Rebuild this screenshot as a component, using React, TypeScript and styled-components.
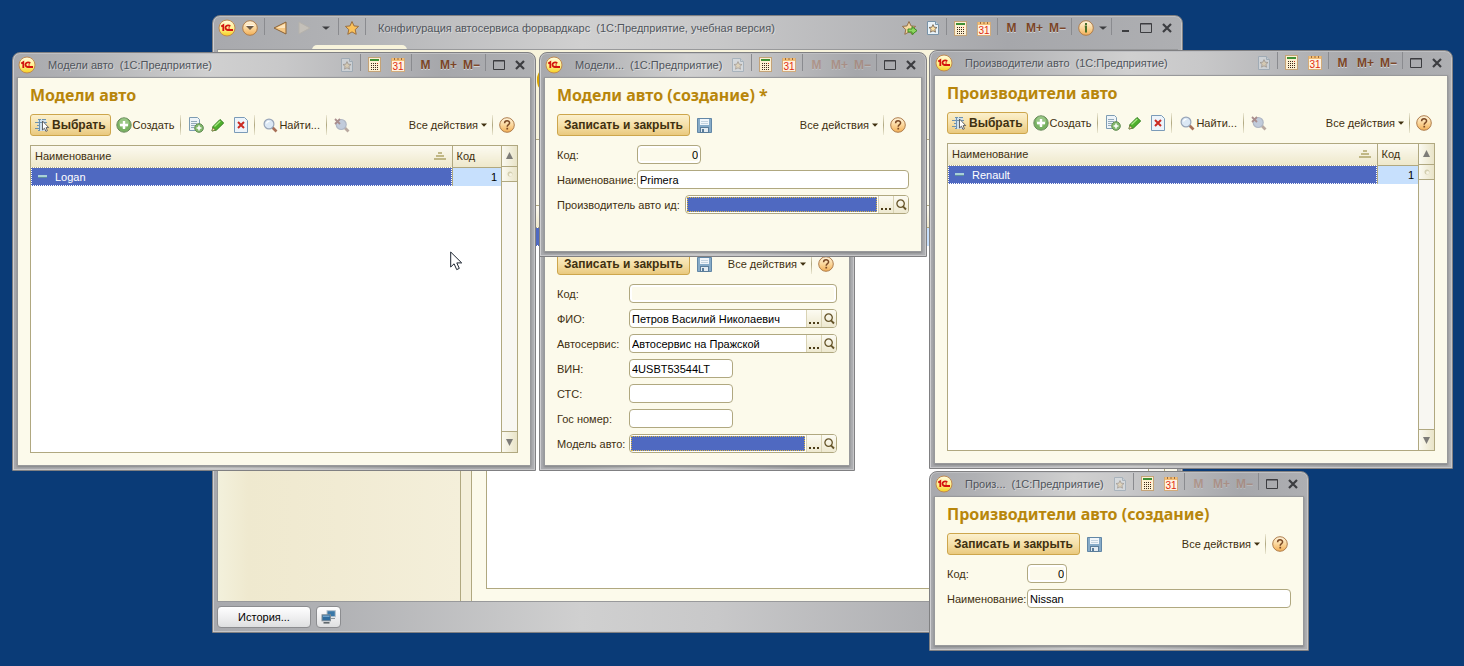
import React from "react";
import styled, { createGlobalStyle, css } from "styled-components";

const line = "#b0a880";
const cream = "#fcfaeb";
const brown = "#3f3010";

const GlobalStyle = createGlobalStyle`
  * { box-sizing: border-box; }
  html, body, #root { height: 100%; }
  body {
    margin: 0;
    font: 11px/14px "Liberation Sans", Arial, sans-serif;
    color: ${brown};
  }
  button, input { font: inherit; color: inherit; margin: 0; padding: 0; }
  button { border: 0; background: none; }
  svg { display: block; flex: none; }
`;

const Desktop = styled.div`
  position: relative;
  min-height: 100%;
  background: #0a3b77;
  overflow: hidden;
`;

/* ---------- window frame ---------- */

const Frame = styled.section<{ $x: number; $y: number; $w: number; $h: number; $main?: boolean }>`
  position: absolute;
  left: ${(p) => p.$x}px;
  top: ${(p) => p.$y}px;
  width: ${(p) => p.$w}px;
  height: ${(p) => p.$h}px;
  display: flex;
  flex-direction: column;
  padding: 0 5px ${(p) => (p.$main ? 0 : 5)}px;
  border: 1px solid #808082;
  border-radius: 8px 8px 0 0;
  background: linear-gradient(90deg, #a8a9ad 0%, #b0b1b4 12%, #d0d0d0 38%, #c8c8c9 52%, #a6a7ab 82%, #aeafb2 100%);
  box-shadow: inset 0 1px 0 #bfc0c3, inset 1px 0 0 #cfcfd1, inset -1px -1px 0 #c6c6c8;
`;

const TitleBar = styled.header<{ $main?: boolean }>`
  flex: none;
  display: flex;
  align-items: center;
  height: ${(p) => (p.$main ? 34 : 25)}px;
  padding-bottom: ${(p) => (p.$main ? 10 : 2)}px;
  margin: 0 -2px 0 -3px;
`;

const TitleText = styled.div`
  flex: 1;
  display: flex;
  gap: 6px;
  padding-left: 10px;
  white-space: nowrap;
  overflow: hidden;
  color: #50555c;
  text-shadow: 1px 1px 0 rgba(255, 255, 255, 0.4);
`;

const Tool = styled.button<{ $w?: number }>`
  flex: none;
  width: ${(p) => p.$w ?? 23}px;
  height: 20px;
  display: flex;
  align-items: center;
  justify-content: center;
  &:disabled { opacity: 0.4; }
`;

const Memory = styled(Tool)`
  font-weight: bold;
  font-size: 12px;
  color: #7a4426;
  text-shadow: 0 1px 0 rgba(255, 255, 255, 0.5);
  &:disabled { color: #a5664a; }
`;

const TitleSep = styled.i`
  flex: none;
  width: 1px;
  height: 17px;
  margin: 0 2px 4px;
  background: #8a8b8f;
`;

const Client = styled.div`
  flex: 1;
  display: flex;
  flex-direction: column;
  padding: 6px 12px 12px;
  background: ${cream};
  box-shadow: 0 0 0 1px #98999b, 0 1px 2px 1px #808283;
`;

const Heading = styled.h1`
  margin: 0 0 8px;
  font: bold 16px/22px "Noto Sans", "Open Sans", sans-serif;
  color: #b8860b;
  white-space: nowrap;
`;

/* ---------- toolbar ---------- */

const Toolbar = styled.div`
  flex: none;
  display: flex;
  align-items: center;
  height: 22px;
  margin-bottom: 9px;
  white-space: nowrap;
`;

const Primary = styled.button<{ $pad: number }>`
  flex: none;
  display: flex;
  align-items: center;
  gap: 2px;
  height: 22px;
  padding: 0 ${(p) => p.$pad}px;
  border: 1px solid #cda64c;
  border-radius: 3px;
  background: linear-gradient(#fbf0cd, #f5e0a9 50%, #e9c97e);
  font-size: 12px;
  font-weight: bold;
`;

const Command = styled.button<{ $ml?: number; $gap?: number }>`
  flex: none;
  display: flex;
  align-items: center;
  gap: ${(p) => p.$gap ?? 1}px;
  margin-left: ${(p) => p.$ml ?? 7}px;
`;

const BarSep = styled.i<{ $ml?: number }>`
  flex: none;
  width: 1px;
  height: 20px;
  margin-left: ${(p) => p.$ml ?? 6}px;
  background: linear-gradient(rgba(176, 168, 128, 0.2), ${line}, rgba(176, 168, 128, 0.2));
`;

const Spacer = styled.div`
  flex: 1;
`;

/* ---------- list ---------- */

const ListBox = styled.div`
  flex: 1;
  display: flex;
  align-items: stretch;
  border: 1px solid ${line};
  background: #fff;
`;

const ListPane = styled.div`
  flex: 1;
`;

const Table = styled.table`
  width: 100%;
  table-layout: fixed;
  border-collapse: collapse;
`;

const Th = styled.th<{ $w?: number }>`
  width: ${(p) => (p.$w ? `${p.$w}px` : "auto")};
  height: 21px;
  padding: 0 4px;
  font-weight: normal;
  text-align: left;
  border-bottom: 1px solid ${line};
  background: linear-gradient(#fcfaf0, #eee8cb);
  & + & { border-left: 1px solid ${line}; }
`;

const ThInner = styled.div`
  display: flex;
  align-items: center;
  justify-content: space-between;
  padding-right: 2px;
`;

const CellName = styled.td`
  height: 19px;
  padding: 0 5px;
  color: #fff;
  background: #4f69c1;
  outline: 1px dotted #fff;
  outline-offset: -1px;
`;

const CellCode = styled.td`
  padding: 0 4px;
  text-align: right;
  color: #000;
  background: #c7e0fd;
  border-left: 1px solid ${line};
`;

const NameInner = styled.div`
  display: flex;
  align-items: center;
  gap: 6px;
`;

const Scroll = styled.div`
  flex: none;
  width: 16px;
  display: flex;
  flex-direction: column;
  border-left: 1px solid ${line};
  background: #f8f7f2;
`;

const ScrollButton = styled.button<{ $down?: boolean; $thumb?: boolean }>`
  height: ${(p) => (p.$thumb ? 15 : 21)}px;
  display: flex;
  align-items: center;
  justify-content: center;
  background: linear-gradient(90deg, #fbfaf1, #e9e4c8);
  ${(p) =>
    p.$down
      ? css`margin-top: auto; border-top: 1px solid ${line};`
      : css`border-bottom: 1px solid ${line};`}
`;

/* ---------- fields ---------- */

const Form = styled.div`
  display: flex;
  flex-direction: column;
  gap: 6px;
`;

const Row = styled.div`
  display: flex;
  align-items: center;
  height: 19px;
`;

const Label = styled.label<{ $w: number }>`
  flex: 0 0 ${(p) => p.$w}px;
  white-space: nowrap;
`;

const fieldFrame = css`
  height: 19px;
  border: 1px solid ${line};
  border-radius: 4px;
  background: #fff;
`;

const Text = styled.input<{ $w?: number }>`
  ${fieldFrame}
  ${(p) => (p.$w ? `width: ${p.$w}px;` : "flex: 1; min-width: 0;")}
  padding: 0 2px;
  color: #000;
  &:read-only {
    text-align: right;
    background: ${cream};
    box-shadow: inset 0 0 0 2px #fff;
  }
`;

const Lookup = styled.div`
  ${fieldFrame}
  flex: 1;
  display: flex;
  align-items: stretch;
  overflow: hidden;
`;

const LookupInput = styled.input<{ $active?: boolean }>`
  flex: 1;
  min-width: 0;
  border: 0;
  padding: 0 2px;
  color: #000;
  background: transparent;
  ${(p) => p.$active && css`margin: 1px; background: #4f69c1; border: 1px dotted #d8b84a;`}
`;

const LookupButton = styled.button`
  width: 15px;
  display: flex;
  align-items: center;
  justify-content: center;
  border-left: 1px solid #d9d3b4;
  background: linear-gradient(#fcfbf2, #eee9d0);
`;

/* ---------- main window parts ---------- */

const MainTab = styled.div`
  width: 95px;
  height: 5px;
  margin: -5px 0 0 94px;
  border-radius: 6px 6px 0 0;
  background: #f8f4dc;
`;

const MainBody = styled.div`
  flex: 1;
  display: flex;
  flex-direction: column;
  background: #f6f2da;
  box-shadow: 0 0 0 1px #98999b;
`;

const Sections = styled.div`
  height: 90px;
  padding: 17px 0 0 319px;
  border-bottom: 1px solid ${line};
  background: #f8f4dc;
`;

const Coin = styled.div`
  width: 24px;
  height: 26px;
  border: 2px solid #d8a400;
  border-radius: 12px;
  background: #fbe23c;
`;

const Columns = styled.div`
  flex: 1;
  display: flex;
`;

const Sidebar = styled.nav`
  width: 243px;
  border-right: 1px solid ${line};
  background: linear-gradient(90deg, #f3f1dc 0, #efe9cf 30px, #f1ebd3 50%, #f4efda 100%);
`;

const Splitter = styled.div`
  width: 11px;
  border-right: 1px solid ${line};
  background: #f4efda;
`;

const MainForm = styled.div`
  flex: 1;
  display: flex;
  flex-direction: column;
  padding: 65px 12px 12px 14px;
  background: ${cream};
`;

const Footer = styled.footer`
  flex: none;
  display: flex;
  gap: 5px;
  height: 31px;
  margin-left: -1px;
  padding-top: 5px;
`;

const FooterButton = styled.button<{ $w: number }>`
  width: ${(p) => p.$w}px;
  height: 22px;
  display: flex;
  align-items: center;
  justify-content: center;
  border: 1px solid #8c8d90;
  border-radius: 4px;
  background: linear-gradient(#fff, #f0f0f1 50%, #dedfe0);
  color: #000;
`;

const Pointer = styled.div`
  position: absolute;
  left: 450px;
  top: 251px;
`;

/* ---------- icons ---------- */

const Logo = () => (
  <svg width="18" height="18" viewBox="0 0 18 18" aria-label="1С">
    <defs>
      <linearGradient id="logo" x1="0" y1="0" x2="0" y2="1">
        <stop offset="0" stopColor="#fffbe0" />
        <stop offset="0.55" stopColor="#fff08a" />
        <stop offset="1" stopColor="#f6cf1c" />
      </linearGradient>
    </defs>
    <circle cx="9" cy="9" r="8" fill="url(#logo)" stroke="#c08a52" />
    <path d="M3.2 7.6L5.3 6.2V12" fill="none" stroke="#d3140f" strokeWidth="1.8" />
    <path d="M12.2 7.4A2.6 2.3 0 1 0 9.8 11H15" fill="none" stroke="#d3140f" strokeWidth="1.8" />
    <path d="M10.2 9H12" stroke="#d3140f" />
  </svg>
);

const Orb = ({ children, size = 16 }: { children: React.ReactNode; size?: number }) => (
  <svg width={size} height={size} viewBox="0 0 16 16">
    <defs>
      <linearGradient id="orb" x1="0" y1="0" x2="0" y2="1">
        <stop offset="0" stopColor="#fff4dd" />
        <stop offset="0.5" stopColor="#fbd79c" />
        <stop offset="1" stopColor="#f2ae55" />
      </linearGradient>
    </defs>
    <circle cx="8" cy="8" r="7.3" fill="url(#orb)" stroke="#ae7d4c" />
    {children}
  </svg>
);

const HelpIcon = () => (
  <Orb>
    <path d="M5.6 6.2c0-3.2 5-3 5-.3 0 1.6-2.4 1.8-2.4 3.8" fill="none" stroke="#7c4a25" strokeWidth="1.5" />
    <rect x="7.4" y="10.8" width="1.7" height="1.7" fill="#7c4a25" />
  </Orb>
);

const InfoIcon = () => (
  <Orb>
    <rect x="7" y="3" width="2" height="2" fill="#476f2a" />
    <path d="M6.8 6.5H8v6" fill="none" stroke="#476f2a" strokeWidth="2" />
  </Orb>
);

const MenuOrb = () => (
  <Orb>
    <path d="M4 6h8l-4 4z" fill="#6d5b48" />
    <path d="M4 5.4h8" stroke="#fff" strokeWidth="0.8" />
  </Orb>
);

const BackIcon = () => (
  <svg width="14" height="14" viewBox="0 0 14 14">
    <path d="M1 7L13 1v12z" fill="#f6c783" stroke="#8a6236" strokeLinejoin="round" />
    <path d="M3.5 7L12 2.8V7z" fill="#fde5bd" />
  </svg>
);

const ForwardIcon = () => (
  <svg width="14" height="14" viewBox="0 0 14 14">
    <path d="M13 7L2 1v12z" fill="#c4c0b9" stroke="#b5b2ac" strokeLinejoin="round" />
  </svg>
);

const Caret = ({ color = "#3f3010", w = 6 }: { color?: string; w?: number }) => (
  <svg width={w} height="4" viewBox="0 0 6 4" preserveAspectRatio="none">
    <path d="M0 .5h6L3 3.8z" fill={color} />
  </svg>
);

const starPath = "M8 1.5l2 4.4 4.6.5-3.4 3.2 1 4.7L8 11.9l-4.2 2.4 1-4.7L1.4 6.4 6 5.9z";

const StarIcon = () => (
  <svg width="16" height="16" viewBox="0 0 16 16">
    <path d={starPath} fill="#fbc25a" stroke="#9b6f3e" strokeLinejoin="round" />
  </svg>
);

const StarAddIcon = () => (
  <svg width="17" height="16" viewBox="0 0 17 16">
    <path d={starPath} fill="#f6d9a0" stroke="#94704a" strokeLinejoin="round" />
    <path d="M7 9h4V6.6l5 4-5 4V12H7z" fill="#8ed75f" stroke="#3c8b23" />
  </svg>
);

const StarPageIcon = () => (
  <svg width="14" height="16" viewBox="0 0 14 16">
    <path d="M1.5 1.5h8l3 3v10h-11z" fill="#e9f2f8" stroke="#7893a8" />
    <path d="M9.5 1.5v3h3" fill="#c6dae8" stroke="#7893a8" />
    <path d="M7 4.6l1.2 2.6 2.8.3-2.1 1.9.6 2.8L7 10.8l-2.5 1.4.6-2.8L3 7.5l2.8-.3z" fill="#fbe0a6" stroke="#6d5a48" strokeWidth="0.8" />
  </svg>
);

const CalcIcon = () => (
  <svg width="13" height="15" viewBox="0 0 13 15" shapeRendering="crispEdges">
    <rect x="0.5" y="0.5" width="12" height="14" fill="#fdf0d2" stroke="#c4a377" />
    <rect x="2" y="2" width="9" height="2" fill="#3f8f35" />
    {[6, 8, 10, 12].map((y) =>
      [3, 5, 7, 9].map((x) => (
        <rect key={`${x}-${y}`} x={x} y={y} width="1" height="1" fill={x === 9 && y === 6 ? "#c8321e" : "#3d2a1c"} />
      ))
    )}
  </svg>
);

const CalendarIcon = () => (
  <svg width="14" height="15" viewBox="0 0 14 15">
    <rect x="0.5" y="1.5" width="13" height="13" fill="#fff3e0" stroke="#d2ab7a" />
    <rect x="1" y="1" width="12" height="3" fill="#f2bd74" />
    <path d="M3.5 1v2M7 1v2M10.5 1v2" stroke="#9c6a3c" />
    <text x="7" y="13" textAnchor="middle" fontSize="10" fontFamily="Liberation Sans" fill="#e02a10">31</text>
  </svg>
);

const MinIcon = () => (
  <svg width="12" height="12" viewBox="0 0 12 12">
    <path d="M3 9h7" stroke="#3c3d40" strokeWidth="2" />
  </svg>
);

const MaxIcon = () => (
  <svg width="12" height="12" viewBox="0 0 12 12">
    <path d="M.5 1.5h11v9H.5zM.5 2h11" fill="none" stroke="#3c3d40" />
  </svg>
);

const CloseIcon = () => (
  <svg width="12" height="12" viewBox="0 0 12 12">
    <path d="M2 2l8 8M10 2l-8 8" stroke="#3c3d40" strokeWidth="2.2" />
  </svg>
);

const PickIcon = () => (
  <svg width="15" height="14" viewBox="0 0 15 14">
    <path d="M3 1h8v12H3z" fill="#cfe0ec" />
    <path d="M3 1.5h3M7 1.5h4M0 4.5h4M5 4.5h7M2 7.5h3M0 10.5h5M3 12.5h2M4.5 1v12" stroke="#6f93ad" fill="none" />
    <path d="M7.5 3v9l2-1.8 1.4 3.2 1.5-.7-1.3-3.1h2.6z" fill="#fff" stroke="#555" strokeWidth="0.9" />
  </svg>
);

const AddIcon = () => (
  <svg width="16" height="16" viewBox="0 0 16 16">
    <circle cx="8" cy="8" r="7.2" fill="#79b262" stroke="#6b8a5e" />
    <circle cx="8" cy="6.2" r="5" fill="#a5cf93" opacity="0.7" />
    <path d="M8 4v8M4 8h8" stroke="#fff" strokeWidth="2.4" />
  </svg>
);

const CopyIcon = () => (
  <svg width="16" height="16" viewBox="0 0 16 16">
    <path d="M1.5.5h8l2 2v11h-10z" fill="#eef4f8" stroke="#7d9cb3" />
    <path d="M3 4.5h6M3 6.5h6M3 8.5h4M3 10.5h3" stroke="#93aabb" />
    <circle cx="11" cy="11" r="4.3" fill="#83b96d" stroke="#5f8a50" />
    <path d="M11 8.6v4.8M8.6 11h4.8" stroke="#fff" strokeWidth="1.5" />
  </svg>
);

const EditIcon = () => (
  <svg width="14" height="14" viewBox="0 0 14 14">
    <path d="M1 13l1-4.5L9 1.5 12.7 5 5.5 12z" fill="#4fb02c" stroke="#2f7d1c" strokeLinejoin="round" />
    <path d="M3.5 8.5L9.3 3" stroke="#a7e683" strokeWidth="1.3" />
    <path d="M1 13l.7-3.3L4.3 12z" fill="#f7e0b4" stroke="#7a6a3d" strokeWidth="0.6" />
  </svg>
);

const DeleteIcon = () => (
  <svg width="14" height="16" viewBox="0 0 14 16">
    <path d="M.5.5h10l3 3v12H.5z" fill="#edf4fa" stroke="#7b9bb8" />
    <path d="M4 5l6 6M10 5l-6 6" stroke="#cb2a21" strokeWidth="2" />
  </svg>
);

const FindIcon = () => (
  <svg width="15" height="15" viewBox="0 0 15 15">
    <path d="M9.5 9.5l4 4" stroke="#a87058" strokeWidth="2.6" />
    <circle cx="6" cy="6" r="4.9" fill="#dbe8f5" stroke="#98a5b8" strokeWidth="1.2" />
    <path d="M3.5 5.5a2.6 2.6 0 0 1 3-2" fill="none" stroke="#fff" strokeWidth="1.2" />
  </svg>
);

const FindOffIcon = () => (
  <svg width="16" height="15" viewBox="0 0 16 15">
    <path d="M10.5 9.5l4 4" stroke="#b9a9a0" strokeWidth="2.8" />
    <circle cx="7.2" cy="6.5" r="5" fill="#c1cbdb" stroke="#b0b7c4" strokeWidth="1.2" />
    <path d="M1 1l5 5M6 1L1 6" stroke="#a98d8d" strokeWidth="1.8" />
  </svg>
);

const SaveIcon = () => (
  <svg width="15" height="15" viewBox="0 0 15 15">
    <path d="M.5.5h14v14H.5z" fill="#86abc8" stroke="#6287a6" />
    <rect x="3" y="1" width="9" height="6" fill="#f1f6fa" />
    <path d="M4 3.5h7M4 5.5h7" stroke="#c3d3df" />
    <rect x="3.5" y="9.5" width="8" height="5" fill="#e4ecf2" stroke="#5a7d9a" />
    <rect x="5" y="11" width="2" height="3" fill="#5a7d9a" />
  </svg>
);

const SortIcon = () => (
  <svg width="12" height="8" viewBox="0 0 12 8">
    <path d="M4 1h4M2 4h8M0 7h12" stroke="#b0a56a" strokeWidth="1.6" />
  </svg>
);

const LoupeIcon = () => (
  <svg width="11" height="12" viewBox="0 0 11 12">
    <circle cx="4.6" cy="4.6" r="3.7" fill="none" stroke="#66552a" strokeWidth="1.3" />
    <path d="M7 7.3l3 3.2" stroke="#66552a" strokeWidth="1.9" />
  </svg>
);

const DotsIcon = () => (
  <svg width="11" height="12" viewBox="0 0 11 12">
    <path d="M0 10h2M4 10h2M8 10h2" stroke="#4c3d18" strokeWidth="2" />
  </svg>
);

const ItemIcon = () => (
  <svg width="13" height="5" viewBox="0 0 13 5">
    <rect x="2" y="1" width="9" height="3" fill="#a9d0d8" />
    <path d="M2 3.5h9" stroke="#5f8f9e" />
  </svg>
);

const ArrowIcon = ({ down }: { down?: boolean }) => (
  <svg width="7" height="8" viewBox="0 0 7 8">
    <path d={down ? "M0 1h7L3.5 8z" : "M0 7h7L3.5 0z"} fill="#7d7c78" />
  </svg>
);

const NetworkIcon = () => (
  <svg width="15" height="14" viewBox="0 0 15 14">
    <rect x="6" y="0.7" width="8.3" height="6" fill="#3a78a8" stroke="#b8c4cc" />
    <path d="M9 8.5h5" stroke="#8e979d" />
    <rect x="1" y="4.8" width="8.5" height="6" fill="#2f6c9e" stroke="#7f8b93" />
    <path d="M2 6.2h6.5" stroke="#8dbbdc" />
    <path d="M2.5 12.8h6" stroke="#5f676c" strokeWidth="1.6" />
  </svg>
);

/* ---------- composed parts ---------- */

const ServiceButtons = ({ memory = true }: { memory?: boolean }) => (
  <>
    <TitleSep />
    <Tool aria-label="Калькулятор"><CalcIcon /></Tool>
    <Tool aria-label="Календарь"><CalendarIcon /></Tool>
    <TitleSep />
    <Memory disabled={!memory}>M</Memory>
    <Memory disabled={!memory}>M+</Memory>
    <Memory disabled={!memory}>M−</Memory>
    <TitleSep />
  </>
);

const WindowEnd = styled.div`
  flex: none;
  display: flex;
  padding-right: 2px;
`;

const SizeButtons = ({ minimize }: { minimize?: boolean }) => (
  <WindowEnd>
    {minimize && <Tool $w={21} aria-label="Свернуть"><MinIcon /></Tool>}
    <Tool $w={21} aria-label="Развернуть"><MaxIcon /></Tool>
    <Tool $w={21} aria-label="Закрыть"><CloseIcon /></Tool>
  </WindowEnd>
);

type Box = { x: number; y: number; w: number; h: number };

type WinProps = Box & {
  title: string; heading: string; memory?: boolean; children: React.ReactNode;
};

const Win = ({ x, y, w, h, title, heading, memory, children }: WinProps) => (
  <Frame $x={x} $y={y} $w={w} $h={h}>
    <TitleBar>
      <Tool aria-label="Меню"><Logo /></Tool>
      <TitleText><span>{title}</span><span>(1С:Предприятие)</span></TitleText>
      <Tool disabled aria-label="В избранное"><StarPageIcon /></Tool>
      <ServiceButtons memory={memory} />
      <SizeButtons />
    </TitleBar>
    <Client>
      <Heading>{heading}</Heading>
      {children}
    </Client>
  </Frame>
);

/* A window whose title bar lies behind the window above it. */
const CoveredWin = ({ x, y, w, h, children }: Box & { children: React.ReactNode }) => (
  <Frame $x={x} $y={y} $w={w} $h={h}>
    <TitleBar />
    <Client>
      <Spacer />
      {children}
    </Client>
  </Frame>
);

const HelpSlot = styled(Command)`
  margin-right: 3px;
`;

const BarEnd = () => (
  <>
    <Spacer />
    <Command $gap={3}>Все действия <Caret /></Command>
    <BarSep $ml={5} />
    <HelpSlot $ml={6} aria-label="Справка"><HelpIcon /></HelpSlot>
  </>
);

const ListToolbar = () => (
  <Toolbar>
    <Primary $pad={4}><PickIcon />Выбрать</Primary>
    <Command $ml={5}><AddIcon />Создать</Command>
    <BarSep />
    <Command aria-label="Скопировать"><CopyIcon /></Command>
    <Command aria-label="Изменить"><EditIcon /></Command>
    <Command $ml={9} aria-label="Удалить"><DeleteIcon /></Command>
    <BarSep />
    <Command $ml={8}><FindIcon />Найти...</Command>
    <BarSep />
    <Command aria-label="Отменить поиск"><FindOffIcon /></Command>
    <BarEnd />
  </Toolbar>
);

const FormToolbar = () => (
  <Toolbar>
    <Primary $pad={6}>Записать и закрыть</Primary>
    <Command aria-label="Записать"><SaveIcon /></Command>
    <BarEnd />
  </Toolbar>
);

const ScrollBar = () => (
  <Scroll>
    <ScrollButton aria-label="Вверх"><ArrowIcon /></ScrollButton>
    <ScrollButton $thumb aria-label="Ползунок">
      <svg width="6" height="6" viewBox="0 0 6 6"><circle cx="3" cy="3" r="2.5" fill="#d4cfb0" /><circle cx="3.6" cy="3.6" r="1.6" fill="#f6f3e2" /></svg>
    </ScrollButton>
    <ScrollButton $down aria-label="Вниз"><ArrowIcon down /></ScrollButton>
  </Scroll>
);

const List = ({ name, codeWidth }: { name: string; codeWidth: number }) => (
  <ListBox>
    <ListPane>
      <Table>
        <thead>
          <tr>
            <Th><ThInner>Наименование<SortIcon /></ThInner></Th>
            <Th $w={codeWidth}>Код</Th>
          </tr>
        </thead>
        <tbody>
          <tr>
            <CellName><NameInner><ItemIcon />{name}</NameInner></CellName>
            <CellCode>1</CellCode>
          </tr>
        </tbody>
      </Table>
    </ListPane>
    <ScrollBar />
  </ListBox>
);

type FieldProps = { id: string; label: string; lw: number; value?: string; w?: number; readOnly?: boolean };

const Field = ({ id, label, lw, value = "", w, readOnly }: FieldProps) => (
  <Row>
    <Label htmlFor={id} $w={lw}>{label}</Label>
    <Text id={id} $w={w} defaultValue={value} readOnly={readOnly} />
  </Row>
);

const LookupField = ({ id, label, lw, value = "", active }: FieldProps & { active?: boolean }) => (
  <Row>
    <Label htmlFor={id} $w={lw}>{label}</Label>
    <Lookup>
      <LookupInput id={id} defaultValue={value} $active={active} />
      <LookupButton aria-label="Выбрать"><DotsIcon /></LookupButton>
      <LookupButton aria-label="Открыть"><LoupeIcon /></LookupButton>
    </Lookup>
  </Row>
);

const MainWindow = () => (
  <Frame as="main" $x={212} $y={15} $w={971} $h={618} $main>
    <TitleBar $main>
      <Tool aria-label="Меню"><Logo /></Tool>
      <Tool $w={24} aria-label="Главное меню"><MenuOrb /></Tool>
      <TitleSep />
      <Tool $w={25} aria-label="Назад"><BackIcon /></Tool>
      <Tool $w={24} aria-label="Вперёд"><ForwardIcon /></Tool>
      <Tool $w={20} aria-label="История"><Caret w={8} color="#3c3d40" /></Tool>
      <TitleSep />
      <Tool $w={22} aria-label="Избранное"><StarIcon /></Tool>
      <TitleSep />
      <TitleText>
        <span>Конфигурация автосервиса форвардкарс</span>
        <span>(1С:Предприятие, учебная версия)</span>
      </TitleText>
      <Tool aria-label="Добавить в избранное"><StarAddIcon /></Tool>
      <Tool aria-label="Страница"><StarPageIcon /></Tool>
      <ServiceButtons />
      <Tool aria-label="О программе"><InfoIcon /></Tool>
      <Tool $w={12} aria-label="Ещё"><Caret w={8} color="#3c3d40" /></Tool>
      <TitleSep />
      <SizeButtons minimize />
    </TitleBar>
    <MainTab />
    <MainBody>
      <Sections><Coin /></Sections>
      <Columns>
        <Sidebar />
        <Splitter />
        <MainForm>
          <ListBox>
            <ListPane>
              <Table>
                <thead><tr><Th /><Th $w={240} /></tr></thead>
                <tbody><tr><CellName /><CellCode /></tr></tbody>
              </Table>
            </ListPane>
            <ScrollBar />
          </ListBox>
        </MainForm>
      </Columns>
    </MainBody>
    <Footer>
      <FooterButton $w={94}>История...</FooterButton>
      <FooterButton $w={25} aria-label="Окна"><NetworkIcon /></FooterButton>
    </Footer>
  </Frame>
);

export default function App() {
  return (
    <>
      <GlobalStyle />
      <Desktop>
        <MainWindow />

        <CoveredWin x={539} y={191} w={316} h={280}>
          <FormToolbar />
          <Form>
            <Field id="c-code" label="Код:" lw={72} readOnly />
            <LookupField id="c-fio" label="ФИО:" lw={72} value="Петров Василий Николаевич" />
            <LookupField id="c-service" label="Автосервис:" lw={72} value="Автосервис на Пражской" />
            <Field id="c-vin" label="ВИН:" lw={72} w={104} value="4USBT53544LT" />
            <Field id="c-sts" label="СТС:" lw={72} w={104} />
            <Field id="c-plate" label="Гос номер:" lw={72} w={104} />
            <LookupField id="c-model" label="Модель авто:" lw={72} active />
          </Form>
        </CoveredWin>

        <Win x={12} y={52} w={524} h={419} title="Модели авто" heading="Модели авто">
          <ListToolbar />
          <List name="Logan" codeWidth={49} />
        </Win>

        <Win x={539} y={52} w={388} h={205} title="Модели..." heading="Модели авто (создание) *" memory={false}>
          <FormToolbar />
          <Form>
            <Field id="m-code" label="Код:" lw={80} w={64} value="0" readOnly />
            <Field id="m-name" label="Наименование:" lw={80} value="Primera" />
            <LookupField id="m-maker" label="Производитель авто ид:" lw={128} active />
          </Form>
        </Win>

        <Win x={929} y={50} w={524} h={419} title="Производители авто" heading="Производители авто">
          <ListToolbar />
          <List name="Renault" codeWidth={41} />
        </Win>

        <Win x={929} y={471} w={380} h={180} title="Произ..." heading="Производители авто (создание)" memory={false}>
          <FormToolbar />
          <Form>
            <Field id="p-code" label="Код:" lw={80} w={40} value="0" readOnly />
            <Field id="p-name" label="Наименование:" lw={80} value="Nissan" />
          </Form>
        </Win>

        <Pointer>
          <svg width="13" height="20" viewBox="0 0 13 20">
            <path d="M.7 1v15l3.4-3.2 2.6 5.8 2.6-1.2-2.5-5.5h4.9z" fill="#fff" stroke="#1c2430" />
          </svg>
        </Pointer>
      </Desktop>
    </>
  );
}
